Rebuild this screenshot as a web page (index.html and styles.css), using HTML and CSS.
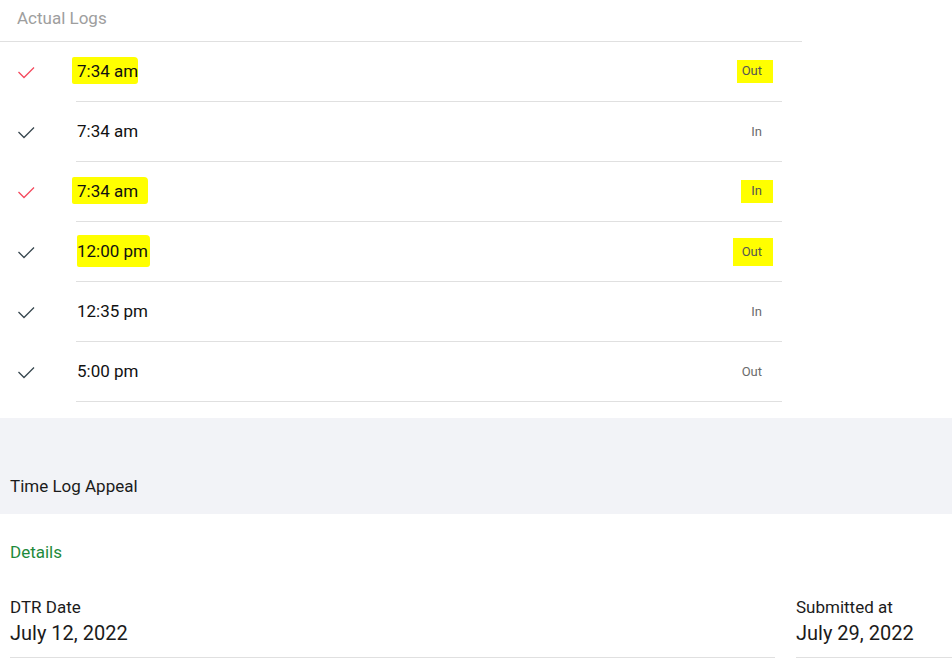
FILE: index.html
```html
<!DOCTYPE html>
<html>
<head>
<meta charset="utf-8">
<link rel="stylesheet" href="styles.css">
</head>
<body>
<section class="logs">
  <div class="logs-head">Actual Logs</div>
  <ul class="log-list">
    <li class="log-row">
      <span class="log-icon"><svg width="20" height="16" viewBox="0 0 20 16"><polyline points="1.5,7 7,12.5 17,2.5" class="chk red"/></svg></span>
      <div class="log-body"><span class="log-time hl">7:34 am</span><span class="log-tag hl-tag">Out</span></div>
    </li>
    <li class="log-row">
      <span class="log-icon"><svg width="20" height="16" viewBox="0 0 20 16"><polyline points="1.5,7 7,12.5 17,2.5" class="chk"/></svg></span>
      <div class="log-body"><span class="log-time">7:34 am</span><span class="log-tag">In</span></div>
    </li>
    <li class="log-row">
      <span class="log-icon"><svg width="20" height="16" viewBox="0 0 20 16"><polyline points="1.5,7 7,12.5 17,2.5" class="chk red"/></svg></span>
      <div class="log-body"><span class="log-time hl hl-wide">7:34 am</span><span class="log-tag hl-tag hl-in">In</span></div>
    </li>
    <li class="log-row">
      <span class="log-icon"><svg width="20" height="16" viewBox="0 0 20 16"><polyline points="1.5,7 7,12.5 17,2.5" class="chk"/></svg></span>
      <div class="log-body"><span class="log-time hl hl-tight">12:00 pm</span><span class="log-tag hl-tag hl-out2">Out</span></div>
    </li>
    <li class="log-row">
      <span class="log-icon"><svg width="20" height="16" viewBox="0 0 20 16"><polyline points="1.5,7 7,12.5 17,2.5" class="chk"/></svg></span>
      <div class="log-body"><span class="log-time">12:35 pm</span><span class="log-tag">In</span></div>
    </li>
    <li class="log-row">
      <span class="log-icon"><svg width="20" height="16" viewBox="0 0 20 16"><polyline points="1.5,7 7,12.5 17,2.5" class="chk"/></svg></span>
      <div class="log-body"><span class="log-time">5:00 pm</span><span class="log-tag">Out</span></div>
    </li>
  </ul>
</section>

<section class="appeal-bar">
  <div class="appeal-title">Time Log Appeal</div>
</section>

<section class="details">
  <div class="details-title">Details</div>
  <div class="details-grid">
    <div class="field">
      <div class="field-label">DTR Date</div>
      <div class="field-value">July 12, 2022</div>
    </div>
    <div class="field">
      <div class="field-label">Submitted at</div>
      <div class="field-value">July 29, 2022</div>
    </div>
  </div>
</section>
</body>
</html>
```

FILE: styles.css
```css
* { box-sizing: border-box; }
html, body {
  margin: 0;
  padding: 0;
  background: #ffffff;
  font-family: Roboto, "Liberation Sans", Arial, sans-serif;
  color: #212121;
  width: 952px;
  overflow: hidden;
}

.logs {
  width: 802px;
}
.logs-head {
  height: 42px;
  padding: 6px 0 0 17px;
  font-size: 17px;
  line-height: 24px;
  color: #9e9e9e;
  border-bottom: 1px solid #e0e0e0;
}
.log-list {
  list-style: none;
  margin: 0;
  padding: 0;
  width: 782px;
}
.log-row {
  display: flex;
  height: 60px;
}
.log-icon {
  width: 76px;
  display: flex;
  align-items: center;
  padding-left: 17px;
  padding-top: 1px;
}
.log-icon svg { display: block; }
.chk {
  fill: none;
  stroke: #37474f;
  stroke-width: 1.3;
}
.chk.red { stroke: #f44a5e; }

.log-body {
  flex: 1;
  display: flex;
  align-items: center;
  justify-content: space-between;
  border-bottom: 1px solid #e0e0e0;
  padding: 0 20px 2px 1px;
}
.log-time {
  font-size: 17px;
  line-height: 20px;
  color: #111111;
}
.log-tag {
  font-size: 13px;
  line-height: 16px;
  color: #6b6b6b;
  margin-top: 2px;
}
.hl {
  background: #ffff00;
  padding: 4px 0 3px 5px;
  margin-left: -5px;
  border-radius: 2px 4px 3px 2px;
}
.hl-wide { padding-right: 10px; margin-right: -10px; }
.hl-tight { padding: 6px 2px 6px 0; margin-left: 0; }
.hl-tag {
  background: #ffff00;
  padding: 3px 11px 4px 5px;
  margin-right: -11px;
  color: #555;
}
.hl-in { padding-left: 10px; }
.hl-out2 { padding: 6px 11px 6px 9px; }

.appeal-bar {
  margin-top: 16px;
  height: 96px;
  background: #f2f3f7;
  padding: 56px 10px 0;
}
.appeal-title {
  font-size: 17px;
  line-height: 24px;
  color: #1b1b1b;
}

.details {
  padding: 26px 0 0 10px;
}
.details-title {
  font-size: 17px;
  line-height: 24px;
  color: #1e8a3c;
}
.details-grid {
  margin-top: 31px;
  display: grid;
  grid-template-columns: 765px 200px;
  column-gap: 21px;
}
.field {
  border-bottom: 1px solid #e0e0e0;
  padding-bottom: 10px;
}
.field-label {
  font-size: 17px;
  line-height: 24px;
  color: #1b1b1b;
}
.field-value {
  font-size: 20px;
  line-height: 28px;
  color: #1b1b1b;
}
```
